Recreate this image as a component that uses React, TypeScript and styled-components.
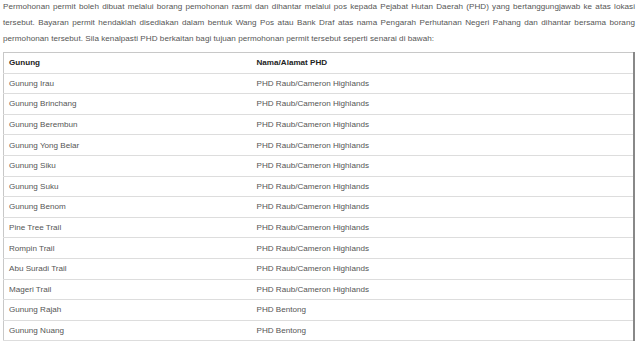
import React from "react";
import styled, { createGlobalStyle } from "styled-components";

const GlobalStyle = createGlobalStyle`
	html, body {
		margin: 0;
		padding: 0;
		background: #fff;
	}
	body {
		font-family: "Liberation Sans", Arial, sans-serif;
	}
`;

const Page = styled.div`
	width: 640px;
	height: 344px;
	overflow: hidden;
	padding: 0 5px 0 3px;
	box-sizing: border-box;
`;

const Intro = styled.p`
	margin: -1px 0 5px 0;
	font-size: 8.1px;
	letter-spacing: 0.04px;
	line-height: 16px;
	color: #555;
	text-align: justify;
`;

const Table = styled.table`
	width: 100%;
	border-collapse: collapse;
	border: 1px solid #c8c8c8;
	border-right: 2px solid #888;
	font-size: 8.1px;
	color: #555;
`;

const Cell = styled.td<{ $head?: boolean }>`
	height: 20.6px;
	padding: 0 5px;
	box-sizing: border-box;
	border-bottom: 1px solid #ddd;
	text-align: left;
	vertical-align: middle;
	font-weight: ${(p) => (p.$head ? 700 : 400)};
	color: ${(p) => (p.$head ? "#222" : "#555")};

	&:first-child {
		width: 248px;
	}
`;

const rows: [string, string][] = [
	["Gunung Irau", "PHD Raub/Cameron Highlands"],
	["Gunung Brinchang", "PHD Raub/Cameron Highlands"],
	["Gunung Berembun", "PHD Raub/Cameron Highlands"],
	["Gunung Yong Belar", "PHD Raub/Cameron Highlands"],
	["Gunung Siku", "PHD Raub/Cameron Highlands"],
	["Gunung Suku", "PHD Raub/Cameron Highlands"],
	["Gunung Benom", "PHD Raub/Cameron Highlands"],
	["Pine Tree Trail", "PHD Raub/Cameron Highlands"],
	["Rompin Trail", "PHD Raub/Cameron Highlands"],
	["Abu Suradi Trail", "PHD Raub/Cameron Highlands"],
	["Mageri Trail", "PHD Raub/Cameron Highlands"],
	["Gunung Rajah", "PHD Bentong"],
	["Gunung Nuang", "PHD Bentong"],
];

const App = () => {
	return (
		<>
			<GlobalStyle />
			<Page>
				<Intro>
					Permohonan permit boleh dibuat melalui borang pemohonan rasmi dan dihantar melalui pos kepada
					Pejabat Hutan Daerah (PHD) yang bertanggungjawab ke atas lokasi tersebut. Bayaran permit hendaklah
					disediakan dalam bentuk Wang Pos atau Bank Draf atas nama Pengarah Perhutanan Negeri Pahang dan
					dihantar bersama borang permohonan tersebut. Sila kenalpasti PHD berkaitan bagi tujuan permohonan
					permit tersebut seperti senarai di bawah:
				</Intro>
				<Table>
					<tbody>
						<tr>
							<Cell $head>Gunung</Cell>
							<Cell $head>Nama/Alamat PHD</Cell>
						</tr>
						{rows.map(([gunung, phd]) => (
							<tr key={gunung}>
								<Cell>{gunung}</Cell>
								<Cell>{phd}</Cell>
							</tr>
						))}
					</tbody>
				</Table>
			</Page>
		</>
	);
};

export default App;
